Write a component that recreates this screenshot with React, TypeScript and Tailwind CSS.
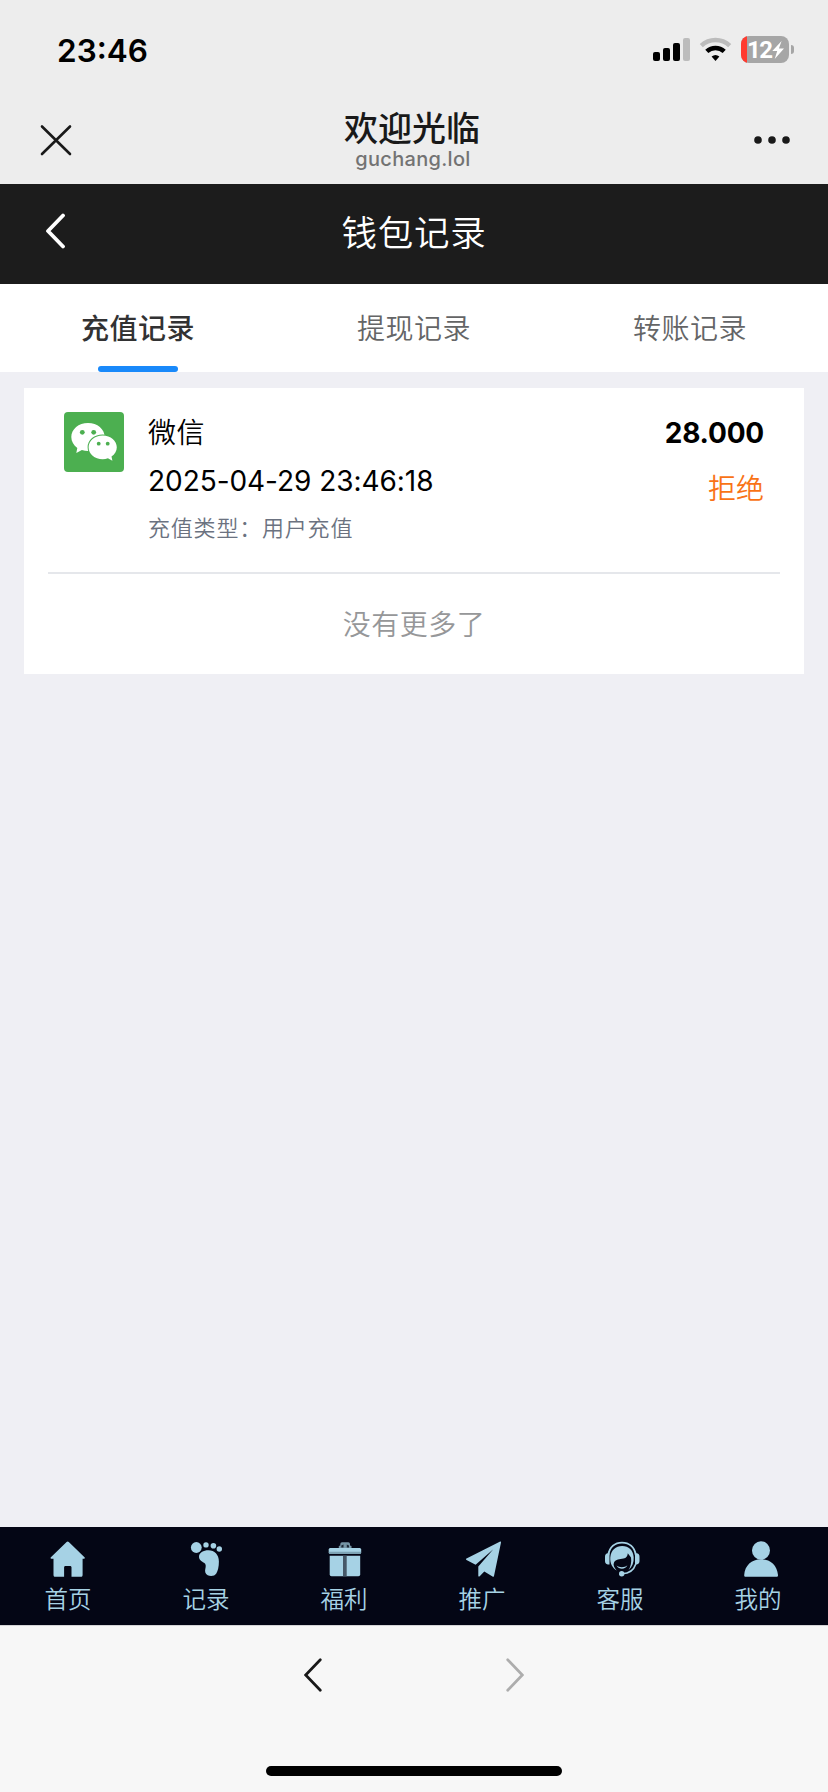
import React, { useState } from 'react';

const tabs = ['充值记录', '提现记录', '转账记录'];

const records = [
  {
    id: 1,
    channel: '微信',
    time: '2025-04-29 23:46:18',
    type: '充值类型：用户充值',
    amount: '28.000',
    status: '拒绝',
  },
];

function StatusBar() {
  return (
    <div className="flex h-24 items-start justify-between pl-[57px] pr-[34px] pt-9">
      <span className="mt-[3px] text-[31.5px] font-semibold leading-[24px] text-black">23:46</span>
      <div className="flex items-start">
        <svg className="h-[27px] w-[80px]" viewBox="0 0 80 27">
          <rect x="0" y="16" width="7" height="9" rx="2" />
          <rect x="10" y="12" width="7" height="13" rx="2" />
          <rect x="20" y="7" width="7" height="18" rx="2" />
          <rect x="30" y="2" width="7" height="23" rx="2" fill="#bcbcbc" />
          <path d="M48.3 9.6a21 21 0 0 1 28.4 0" fill="none" stroke="#bcbcbc" strokeWidth="4.6" />
          <path d="M53.8 15.4a13 13 0 0 1 17.4 0" fill="none" stroke="#000" strokeWidth="4.6" />
          <path d="M58.6 20.6a6.4 6.4 0 0 1 7.8 0L62.5 25Z" />
        </svg>
        <div className="ml-2 flex h-[27px] w-12 items-center overflow-hidden rounded-lg bg-[#a6a6a6]">
          <div className="h-full w-1.5 bg-[#ff3b30]" />
          <span className="w-[25px] font-['Roboto',sans-serif] text-[24px] font-bold leading-none tracking-[-1.5px] text-white">12</span>
          <svg className="h-[18px] w-3" viewBox="0 0 12 18">
            <path d="M9.6 0 0.3 10H5.2L2.7 18 12 7.6H6.9Z" fill="#fff" />
          </svg>
        </div>
        <div className="ml-0.5 mt-[9px] h-[9px] w-[3px] rounded-r-full bg-[#a6a6a6]" />
      </div>
    </div>
  );
}

function BrowserBar() {
  return (
    <div className="flex h-[88px] items-start justify-between pl-[40px] pr-[38px]">
      <svg className="mt-7 h-8 w-8" viewBox="0 0 32 32">
        <path d="M2 2.5 30 30M30 2.5 2 30" stroke="#191919" strokeWidth="2.6" strokeLinecap="round" />
      </svg>
      <div className="flex flex-col items-center">
        <h1 className="mt-[13px] pr-0.5 text-[34px] font-medium leading-[40px] text-[#191919]">欢迎光临</h1>
        <span className="text-[20px] font-medium leading-[20px] tracking-[0.3px] text-[#737373]">guchang.lol</span>
      </div>
      <svg className="mt-[40px] h-2 w-9" viewBox="0 0 36 8">
        <circle cx="4" cy="4" r="3.8" fill="#191919" />
        <circle cx="18" cy="4" r="3.8" fill="#191919" />
        <circle cx="32" cy="4" r="3.8" fill="#191919" />
      </svg>
    </div>
  );
}

function WechatIcon() {
  return (
    <svg className="h-[60px] w-[60px] rounded bg-[#4caf50]" viewBox="0 0 60 60">
      <path
        d="M24 11C14.6 11 7.3 17.2 7.3 25c0 4.5 2.3 8.2 6 10.9L12.3 41l5.6-3.1c2 .7 4 1.1 6.1 1.1 9.4 0 16.7-6.2 16.7-14S33.4 11 24 11Z"
        fill="#fff"
      />
      <path
        d="M38.7 23.4c8 0 14.1 5.3 14.1 11.9 0 3.9-2 7.1-5.3 9.3l.9 4.1-4.5-2.4c-1.6.6-3.4.9-5.2.9-8 0-14.1-5.2-14.1-11.9s6.1-11.9 14.1-11.9Z"
        fill="#fff"
        stroke="#4caf50"
        strokeWidth="2"
        paintOrder="stroke"
      />
      <g fill="#4caf50">
        <circle cx="18.3" cy="20.3" r="2.4" />
        <circle cx="29.7" cy="20.3" r="2.4" />
        <circle cx="34.7" cy="31.7" r="1.9" />
        <circle cx="43.7" cy="31.7" r="1.9" />
      </g>
    </svg>
  );
}

const navItems = [
  {
    label: '首页',
    icon: (
      <path d="M16.6.9a1.600 1.600 0 0 1 2.200 0L34.500 16.200c.7.7.4 1.500-.5 1.500h-1.400v16.200c0 1.200-.7 1.900-1.900 1.900h-9.200V26.500c0-1-.6-1.500-1.500-1.500h-4.400c-1 0-1.500.5-1.500 1.500v9.300H5.400c-1.200 0-1.900-.7-1.900-1.900V17.700H1.400c-.9 0-1.200-.8-.5-1.500Z" />
    ),
  },
  {
    label: '记录',
    icon: (
      <>
        <circle cx="8.300" cy="6.500" r="5.400" />
        <circle cx="18" cy="3.900" r="2.700" />
        <circle cx="25.400" cy="4.700" r="2.800" />
        <circle cx="31.300" cy="8" r="2.700" />
        <path d="M20.500 9.200c6 0 10.400 4.300 10.400 11.300 0 5-1 9.500-2.600 12.100-1.600 2.600-5.700 3.200-8.600 1.700-2.500-1.300-3-3.700-2.400-6.200.7-3 .8-5-1.300-6.300C13.300 20.100 11 18.800 11 15.700c0-3.900 4.300-6.500 9.500-6.500Z" />
      </>
    ),
  },
  {
    label: '福利',
    icon: (
      <>
        <path d="M12.800 7V5L14.300 4.500V3Q14.300 1.300 16 1.300H22.300Q24 1.300 24 3V4.500L25.500 5V7" fill="#7695a6" />
        <path d="M15.300 6.500V4.500L17.500 3.500V6.500ZM20.800 6.500V3.500L23 4.500V6.500Z" fill="#1c2a38" />
        <rect x="2.700" y="7" width="32.500" height="5.800" rx="1.500" />
        <path d="M2.900 10.700h32.100v2H2.900Z" fill="#7da3b5" />
        <path d="M3.700 14.700H34.200V33.500Q34.200 35.300 32.400 35.300H5.500Q3.700 35.300 3.700 33.500Z" />
        <path d="M17 14.700h3.700v20.600H17Z" fill="#465868" />
      </>
    ),
  },
  {
    label: '推广',
    icon: (
      <path d="M37 1.400 30 34.900c-.2 1-.8 1.200-1.500.7l-8.200-5.200-4.600 4.800c-.6.6-1.400.4-1.400-.5V25.600L29.300 8.200 11.600 23.800 2.500 19c-.7-.4-.7-1 0-1.400L35.700.7c.9-.5 1.500-.1 1.300.7Z" />
    ),
  },
  {
    label: '客服',
    icon: (
      <>
        <path d="M6.300 14C7.600 6 13 1.600 20 1.600S32.500 6 33.800 14" fill="none" stroke="currentColor" strokeWidth="1.900" />
        <path d="M7.500 12.200v11.200H5.800C3.800 23.400 3 21.800 3 20v-4.300c0-2 1-3.500 3-3.500ZM33 12.200v11.200h1.700c2 0 2.800-1.600 2.800-3.400v-4.300c0-2-1-3.500-3-3.500Z" />
        <path d="M8.300 16.300C9 9 13.700 5 20.200 5s11 4.200 11.500 11.300c.3 5.200-1.500 9.700-5.200 12.700 2.100-3 3.300-8 2.500-12.500L25.800 12.200C25.600 15 24.300 17 21.500 17.600c-4 .9-7.700.7-9.400 3.600-1.300 2.400 0 5.500 2.600 8.200-4.300-2.100-6.900-7.100-6.400-13.100Z" />
        <path d="M14.500 24.500c3 2.300 8 2.300 10.900-.3-1.500 4.300-8.400 4.900-10.900.3Z" />
        <path d="M33.800 23c-1.800 5.500-6 9.500-13.500 9.800" fill="none" stroke="currentColor" strokeWidth="1.600" />
        <circle cx="19.700" cy="32.800" r="2.700" />
      </>
    ),
  },
  {
    label: '我的',
    icon: (
      <>
        <ellipse cx="21" cy="9.500" rx="9" ry="9.300" />
        <path d="M4.200 34C4.800 24.500 11.500 18.200 21 18.200S37.200 24.500 38 34c.1 1.200-.5 1.800-1.500 1.800H5.700c-1 0-1.600-.6-1.500-1.800Z" />
      </>
    ),
  },
];

function BottomNav() {
  return (
    <nav className="grid h-[98px] grid-cols-6 bg-[#040615] text-[#a6d2e5]">
      {navItems.map((item) => (
        <button key={item.label} type="button" className="flex flex-col items-center pr-0.5 pt-3.5">
          <svg className="h-9 w-9 overflow-visible" viewBox="0 0 36 36" fill="currentColor">
            {item.icon}
          </svg>
          <span className="mt-2 text-[23.5px] font-[350] leading-[30px]">{item.label}</span>
        </button>
      ))}
    </nav>
  );
}

function BrowserFooter() {
  return (
    <footer className="flex h-[167px] flex-col items-center border-t border-[#d4d4d6] bg-[#f7f7f7]">
      <div className="mt-8 flex w-[220px] justify-between">
        <svg className="h-[34px] w-[18px]" viewBox="0 0 18 34">
          <path d="M16.300 1.700 1.700 17l14.600 15.300" fill="none" stroke="#191919" strokeWidth="2.700" strokeLinecap="round" />
        </svg>
        <svg className="h-[34px] w-[18px]" viewBox="0 0 18 34">
          <path d="M1.700 1.700 16.300 17 1.700 32.300" fill="none" stroke="#adadad" strokeWidth="2.700" strokeLinecap="round" />
        </svg>
      </div>
      <div className="mt-[74px] h-2.5 w-[296px] rounded-full bg-black" />
    </footer>
  );
}

export default function App() {
  const [active, setActive] = useState(0);

  return (
    <div className="flex h-[1792px] w-[828px] flex-col overflow-hidden bg-[#efeff4] font-['Inter','Noto_Sans_CJK_SC',sans-serif]">
      <div className="bg-[#ededed]">
        <StatusBar />
        <BrowserBar />
      </div>

      <header className="grid h-[100px] grid-cols-[100px_1fr_100px] items-center bg-[#1c1c1c] text-white">
        <button type="button" className="pb-[7px] pl-[45px]">
          <svg className="h-9 w-5" viewBox="0 0 20 36">
            <path d="M18 2.500 3 18l15 15.500" fill="none" stroke="#fff" strokeWidth="3.800" strokeLinecap="round" strokeLinejoin="round" />
          </svg>
        </button>
        <h2 className="text-center text-[35.5px] font-[350] leading-[48px] tracking-[0.7px]">钱包记录</h2>
      </header>

      <div className="grid h-[88px] grid-cols-3 bg-white">
        {tabs.map((tab, i) => (
          <button key={tab} type="button" onClick={() => setActive(i)} className="flex flex-col items-center justify-between pt-[25px]">
            <span
              className={
                i === active
                  ? 'text-[28px] font-medium leading-[40px] tracking-[0.5px] text-[#323233]'
                  : 'text-[28px] font-[350] leading-[40px] tracking-[0.5px] text-[#646566]'
              }
            >
              {tab}
            </span>
            {i === active && <span className="h-1.5 w-20 rounded-full bg-[#1989fa]" />}
          </button>
        ))}
      </div>

      <main className="flex-1 px-6 pt-4">
        <div className="h-[286px] bg-white px-6">
          {records.map((r) => (
            <div key={r.id} className="flex h-[186px] items-start border-b-2 border-[#e5e7eb] px-4 pt-6">
              <WechatIcon />
              <div className="ml-6 flex flex-1 flex-col text-[28px] text-black">
                <span className="mt-px font-[350] leading-[40px] tracking-[0.5px]">{r.channel}</span>
                <span className="mt-2 leading-[40px] tracking-[-0.05px]">{r.time}</span>
                <span className="mt-[11px] text-[22px] font-[350] leading-[32px] tracking-[0.8px] text-[#6b7280]">{r.type}</span>
              </div>
              <div className="flex flex-col items-end text-[28px]">
                <span className="mt-px font-bold leading-[40px] tracking-[-0.2px] text-black">{r.amount}</span>
                <span className="mt-4 font-[350] leading-[40px] text-[#f97316]">{r.status}</span>
              </div>
            </div>
          ))}
          <p className="pt-[27px] text-center text-[28px] font-[350] leading-[48px] tracking-[0.5px] text-[#969799]">没有更多了</p>
        </div>
      </main>

      <BottomNav />
      <BrowserFooter />
    </div>
  );
}
